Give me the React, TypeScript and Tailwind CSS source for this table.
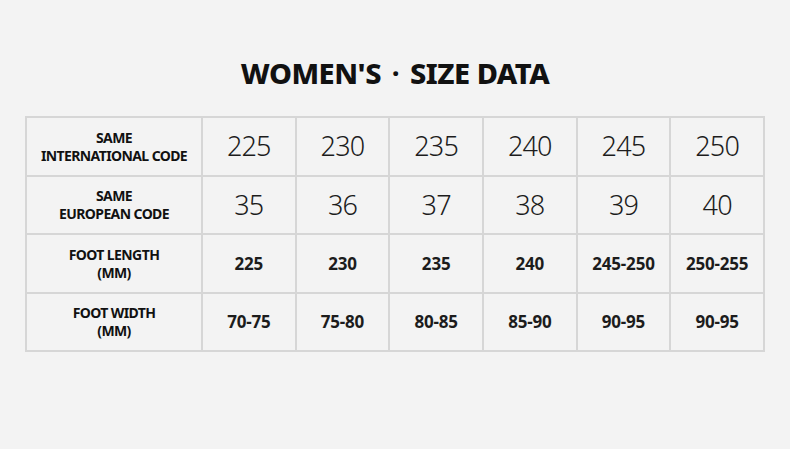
import React from 'react';

const rows = [
  { label: ['SAME', 'INTERNATIONAL CODE'], values: ['225', '230', '235', '240', '245', '250'], big: true },
  { label: ['SAME', 'EUROPEAN CODE'], values: ['35', '36', '37', '38', '39', '40'], big: true },
  { label: ['FOOT LENGTH', '(MM)'], values: ['225', '230', '235', '240', '245-250', '250-255'], big: false },
  { label: ['FOOT WIDTH', '(MM)'], values: ['70-75', '75-80', '80-85', '85-90', '90-95', '90-95'], big: false },
];

const App: React.FC = () => {
  return (
    <div className="w-[790px] h-[449px] bg-[#f3f3f3] overflow-hidden" style={{ fontFamily: '"Noto Sans", "Noto Sans CJK SC", sans-serif' }}>
      <div className="h-[116px] pt-[53px]">
        <h1 className="text-center text-[29px] leading-[40px] font-extrabold text-[#111] tracking-[-0.5px]">
          WOMEN'S <span className="inline-block mx-[4px] text-[26px] align-[1px]">·</span> SIZE DATA
        </h1>
      </div>
      <div className="ml-[25px] w-[740px] p-[2px] gap-[2px] bg-[#d6d6d6] grid grid-cols-[174px_repeat(6,1fr)] grid-rows-[57px_56px_57px_56px]">
        {rows.map((row, i) => (
          <React.Fragment key={i}>
            <div className="bg-[#f3f3f3] flex flex-col items-center justify-center text-[14px] leading-[18px] font-bold text-[#111] tracking-[-0.6px]">
              <span>{row.label[0]}</span>
              <span>{row.label[1]}</span>
            </div>
            {row.values.map((v, j) => (
              <div
                key={j}
                className={
                  row.big
                    ? 'bg-[#f3f3f3] flex items-center justify-center text-[27px] font-light text-[#1c1c1c] tracking-[-0.8px]'
                    : 'bg-[#f3f3f3] flex items-center justify-center text-[17px] font-bold text-[#1c1c1c] tracking-[-0.2px]'
                }
              >
                {v}
              </div>
            ))}
          </React.Fragment>
        ))}
      </div>
    </div>
  );
};

export default App;
